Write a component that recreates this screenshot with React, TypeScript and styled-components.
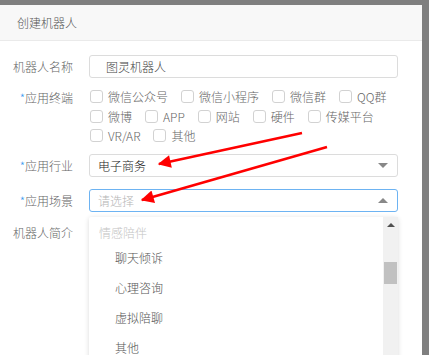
import React from "react";
import styled, { createGlobalStyle } from "styled-components";

const terminals = [
	["微信公众号", "微信小程序", "微信群", "QQ群"],
	["微博", "APP", "网站", "硬件", "传媒平台"],
	["VR/AR", "其他"],
];

const scenes = ["聊天倾诉", "心理咨询", "虚拟陪聊", "其他"];

const App: React.FC = () => {
	return (
		<Page>
			<GlobalStyle />
			<Modal>
				<Header>创建机器人</Header>
				<Form>
					<Row>
						<Label>机器人名称</Label>
						<Input>图灵机器人</Input>
					</Row>
					<Row $gap={8}>
						<Label $required>应用终端</Label>
						<CheckGroup>
							{terminals.map((line, i) => (
								<CheckLine key={i}>
									{line.map((t) => (
										<CheckItem key={t}>
											<Box />
											<span>{t}</span>
										</CheckItem>
									))}
								</CheckLine>
							))}
						</CheckGroup>
					</Row>
					<Row $gap={8}>
						<Label $required>应用行业</Label>
						<Select>
							<Value>电子商务</Value>
							<Caret />
						</Select>
					</Row>
					<Row $gap={12}>
						<Label $required>应用场景</Label>
						<SelectWrap>
							<Select $focused>
								<Placeholder>请选择</Placeholder>
								<Caret $up />
							</Select>
							<Dropdown>
								<OptionList>
									<GroupTitle>情感陪伴</GroupTitle>
									{scenes.map((s) => (
										<Option key={s}>{s}</Option>
									))}
								</OptionList>
								<ScrollBar>
									<ScrollArrow />
									<Thumb />
								</ScrollBar>
							</Dropdown>
						</SelectWrap>
					</Row>
					<Row $gap={9}>
						<Label>机器人简介</Label>
					</Row>
				</Form>
			</Modal>
			<Arrows width="429" height="355" viewBox="0 0 429 355">
				<defs>
					<marker
						id="head"
						viewBox="0 0 10 10"
						refX="9"
						refY="5"
						markerWidth="7.5"
						markerHeight="5"
						orient="auto"
					>
						<path d="M0,0 L10,5 L0,10 z" fill="#ff0000" />
					</marker>
				</defs>
				<line x1="302" y1="133" x2="159" y2="164" stroke="#ff0000" strokeWidth="2.6" markerEnd="url(#head)" />
				<line x1="327" y1="147" x2="142" y2="200" stroke="#ff0000" strokeWidth="2.6" markerEnd="url(#head)" />
			</Arrows>
		</Page>
	);
};

export default App;

const GlobalStyle = createGlobalStyle`
	body {
		margin: 0;
		background: #7f7f7f;
		font-family: "Noto Sans CJK SC", "Noto Sans", sans-serif;
		font-weight: 300;
	}
`;

const Page = styled.div`
	position: relative;
	width: 429px;
	height: 355px;
	overflow: hidden;
	padding-top: 5px;
	box-sizing: border-box;
`;

const Modal = styled.div`
	width: 422px;
	height: 350px;
	background: #fff;
	border-top-right-radius: 2px;
`;

const Header = styled.div`
	height: 35px;
	line-height: 35px;
	padding-left: 17px;
	background: #f8f8f8;
	border-bottom: 1px solid #eaeaea;
	font-size: 12px;
	color: #555;
`;

const Form = styled.div`
	padding-top: 14px;
`;

const Row = styled.div<{ $gap?: number }>`
	display: flex;
	align-items: flex-start;
	margin-top: ${(p) => p.$gap || 0}px;
`;

const Label = styled.div<{ $required?: boolean }>`
	width: 73px;
	padding-right: 16px;
	flex-shrink: 0;
	text-align: right;
	font-size: 12px;
	line-height: 23px;
	color: #666;

	&::before {
		content: "${(p) => (p.$required ? "*" : "")}";
		color: #3d9cf0;
	}
`;

const Input = styled.div`
	width: 309px;
	height: 23px;
	box-sizing: border-box;
	border: 1px solid #dcdcdc;
	border-radius: 3px;
	padding-left: 16px;
	font-size: 12px;
	line-height: 21px;
	color: #444;
`;

const CheckGroup = styled.div`
	display: flex;
	flex-direction: column;
	padding-top: 1px;
`;

const CheckLine = styled.div`
	display: flex;
	gap: 12px;
	height: 19.5px;
	align-items: center;
`;

const CheckItem = styled.label`
	display: flex;
	align-items: center;
	gap: 5px;
	font-size: 12px;
	color: #666;
	margin-left: 1px;
`;

const Box = styled.span`
	width: 13px;
	height: 13px;
	box-sizing: border-box;
	border: 1px solid #d2d2d2;
	border-radius: 3px;
	background: #fff;
`;

const SelectWrap = styled.div`
	position: relative;
`;

const Select = styled.div<{ $focused?: boolean }>`
	width: 309px;
	height: 23px;
	box-sizing: border-box;
	border: 1px solid ${(p) => (p.$focused ? "#6db3f2" : "#dcdcdc")};
	border-radius: 3px;
	padding: 0 9px 0 8px;
	display: flex;
	align-items: center;
	justify-content: space-between;
	font-size: 12px;
	color: #333;
`;

const Value = styled.span`
	color: #222;
`;

const Placeholder = styled.span`
	color: #b5b5b5;
`;

const Caret = styled.span<{ $up?: boolean }>`
	width: 0;
	height: 0;
	border-left: 5px solid transparent;
	border-right: 5px solid transparent;
	${(p) =>
		p.$up ? "border-bottom: 5px solid #888;" : "border-top: 5px solid #888;"}
`;

const Dropdown = styled.div`
	position: absolute;
	top: 28px;
	left: 0;
	width: 309px;
	height: 160px;
	display: flex;
	background: #fff;
	box-shadow: 0 1px 5px rgba(0, 0, 0, 0.15);
	border-radius: 2px;
	z-index: 2;
`;

const OptionList = styled.div`
	flex: 1;
	padding-top: 6px;
`;

const GroupTitle = styled.div`
	padding-left: 10px;
	line-height: 20px;
	font-size: 12px;
	color: #c4c4c4;
`;

const Option = styled.div`
	padding-left: 26px;
	line-height: 30px;
	font-size: 12px;
	color: #555;
`;

const ScrollBar = styled.div`
	width: 15px;
	background: #f1f1f1;
	display: flex;
	flex-direction: column;
	align-items: center;
`;

const ScrollArrow = styled.span`
	margin-top: 6px;
	width: 0;
	height: 0;
	border-left: 4px solid transparent;
	border-right: 4px solid transparent;
	border-bottom: 4px solid #505050;
`;

const Thumb = styled.span`
	margin-top: 35px;
	width: 13px;
	height: 22px;
	background: #c1c1c1;
`;

const Arrows = styled.svg`
	position: absolute;
	left: 0;
	top: 0;
	pointer-events: none;
	z-index: 3;
`;
